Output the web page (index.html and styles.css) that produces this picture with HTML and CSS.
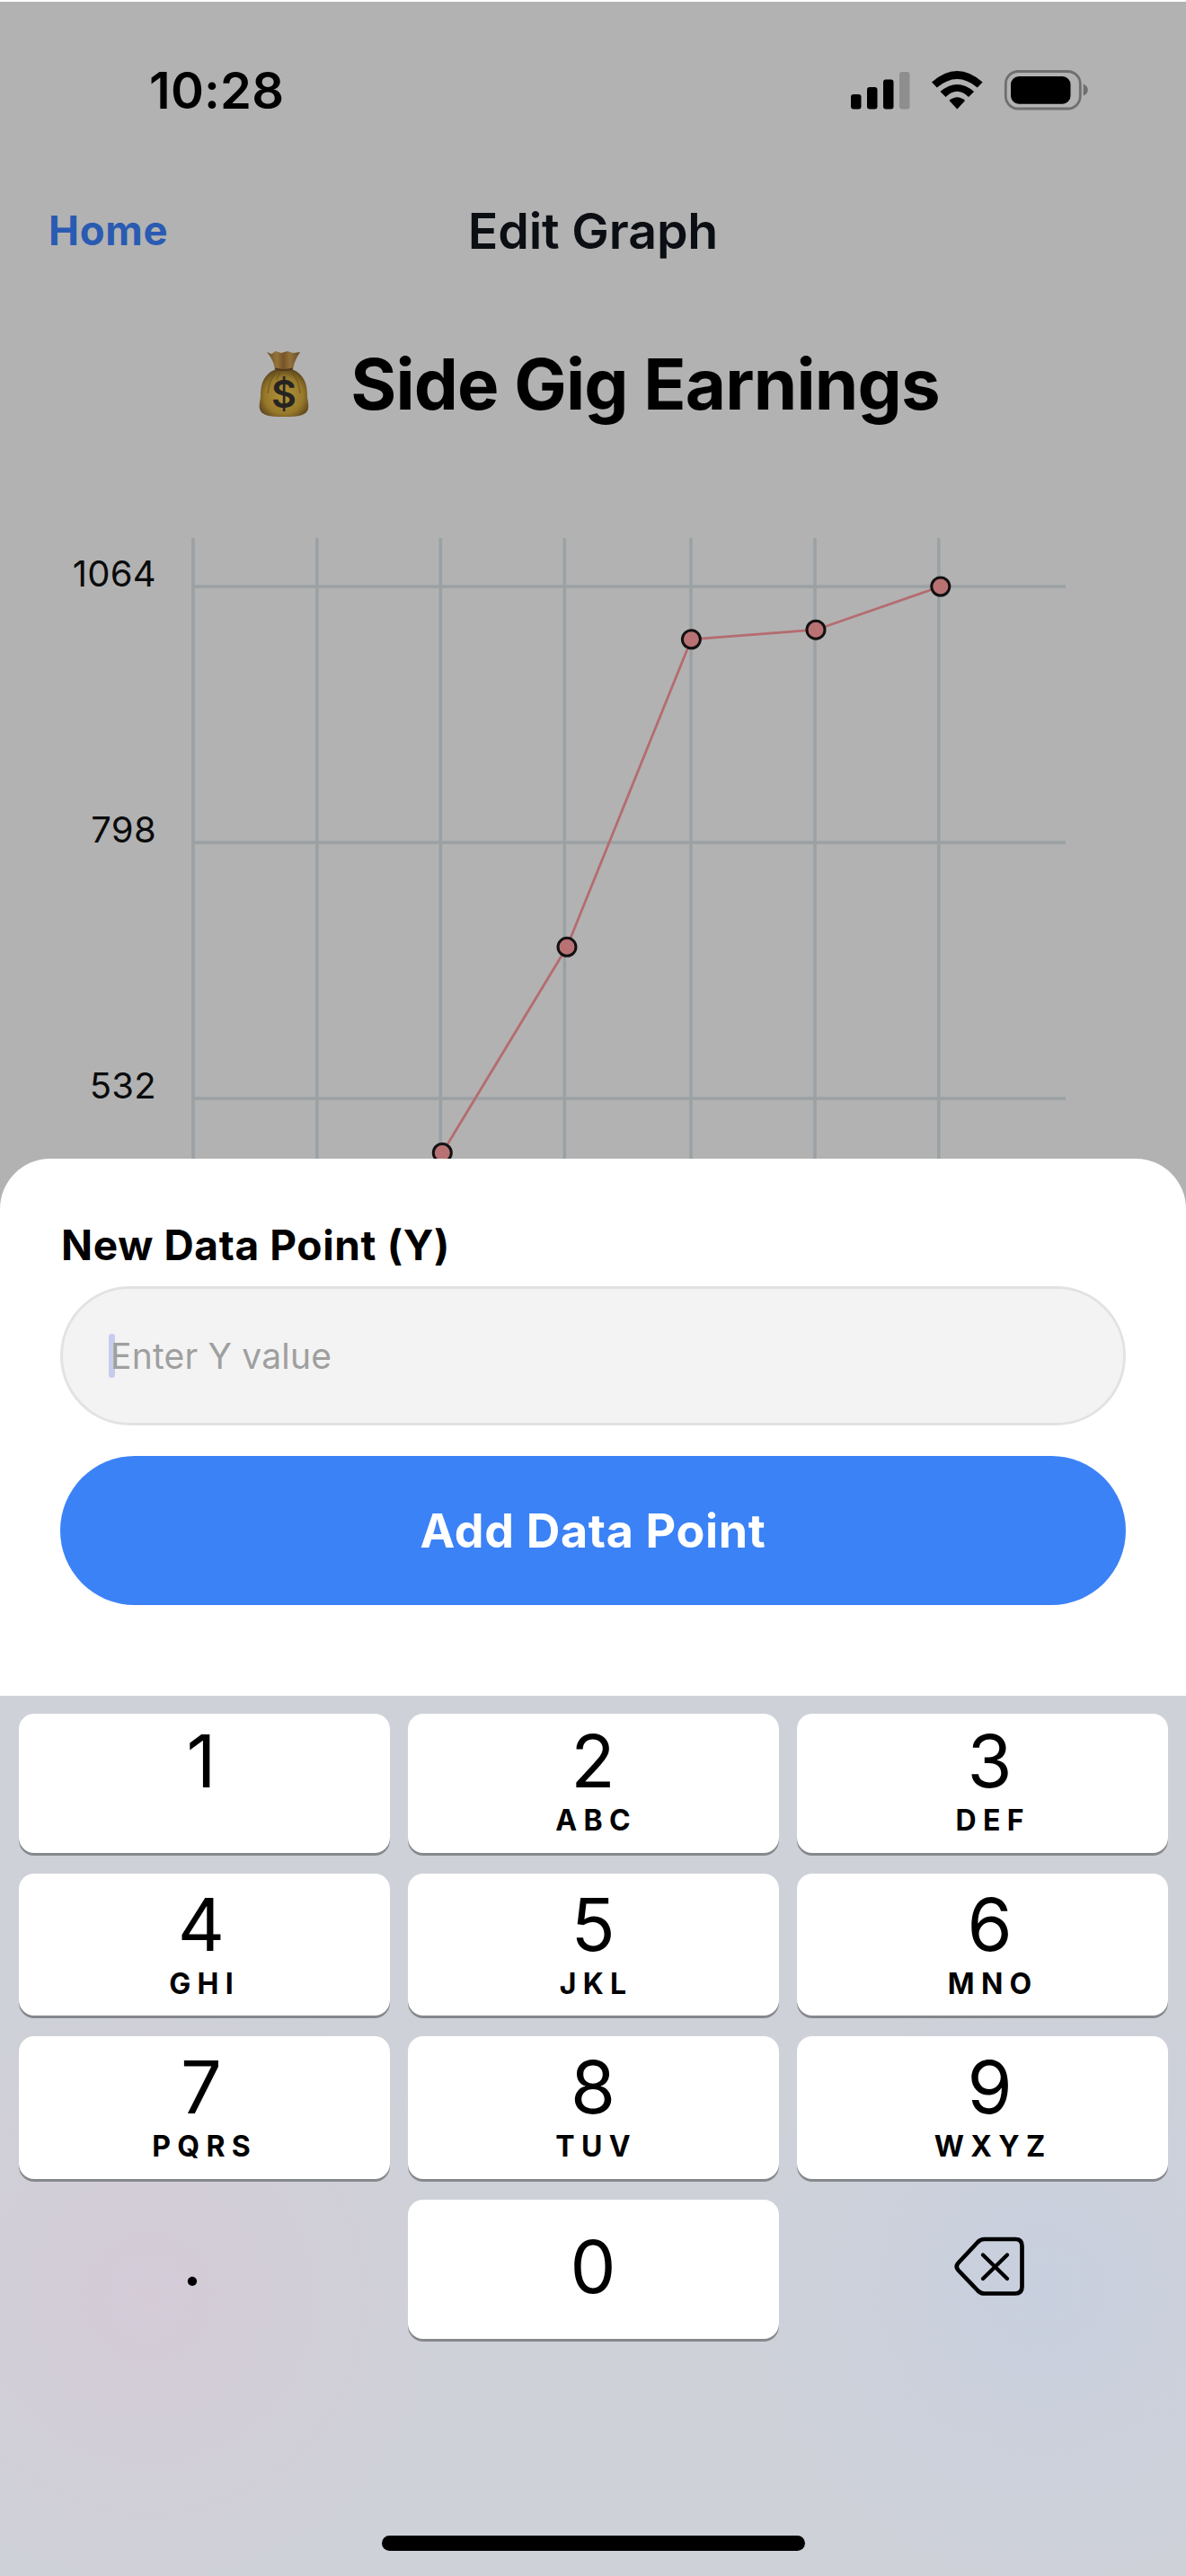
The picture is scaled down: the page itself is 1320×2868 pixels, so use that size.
FILE: index.html
```html
<!DOCTYPE html>
<html lang="en">
<head>
<meta charset="utf-8">
<title>Edit Graph</title>
<link rel="stylesheet" href="styles.css">
</head>
<body>
<div class="screen">
  <div class="page">
    <header class="status">
      <span class="time">10:28</span>
      <svg class="status-icons" width="266" height="46" viewBox="946 78 266 46">
        <g>
          <rect x="947" y="105" width="11.5" height="16.500" rx="3"/>
          <rect x="965" y="97" width="11.500" height="24.500" rx="3"/>
          <rect x="983" y="88.500" width="11.500" height="33" rx="3"/>
          <rect x="1001" y="80" width="11.500" height="41.500" rx="3" fill="#8e8e8e"/>
        </g>
        <path d="M1037 91.500Q1065.300 66.500 1093.600 91.500L1087.800 97.500Q1065.300 78.500 1042.800 97.500Z"/>
        <path d="M1046.500 102Q1065.300 86 1084.100 102L1078 108Q1065.300 95.500 1052.600 108Z"/>
        <path d="M1056.500 112Q1065.300 104.500 1074.100 112L1065.300 121.500Z"/>
        <rect x="1119.300" y="79.500" width="83" height="41.500" rx="14" fill="none" stroke="#6f6f6f" stroke-width="2.800"/>
        <rect x="1125" y="85" width="66.500" height="30.700" rx="9"/>
        <path d="M1205.700 93.500Q1210.800 95.500 1210.800 100T1205.700 106.500Z" fill="#6f6f6f"/>
      </svg>
    </header>
    <nav class="nav">
      <a class="back">Home</a>
      <h1 class="nav-title">Edit Graph</h1>
    </nav>
    <div class="heading">
      <svg class="bag" width="56" height="75" viewBox="0 0 56 75">
        <defs>
          <radialGradient id="sack" cx=".5" cy=".55" r=".6">
            <stop offset="0" stop-color="#b09339"/>
            <stop offset=".65" stop-color="#98792b"/>
            <stop offset="1" stop-color="#54401b"/>
          </radialGradient>
          <linearGradient id="neck" x1="0" x2="1" y1="0" y2="0">
            <stop offset="0" stop-color="#68502a"/>
            <stop offset=".3" stop-color="#94733a"/>
            <stop offset=".5" stop-color="#755425"/>
            <stop offset=".7" stop-color="#93713a"/>
            <stop offset="1" stop-color="#634b26"/>
          </linearGradient>
        </defs>
        <path d="M17 22C6 27 2 37 2 50C2 56 0 59 1 65C3 73 12 74 28 74S53 73 55 65C56 59 54 56 54 50C54 37 50 27 39 22Z" fill="url(#sack)"/>
        <path d="M9 2L14 4L19 1L25 3L32 1L38 3L46 2C42 8 39 14 38 21Q28 24 18 21C17 14 14 8 9 2Z" fill="url(#neck)"/>
        <path d="M18 20.500Q28 23.500 38 20.500" fill="none" stroke="#51391a" stroke-width="2.200"/>
        <path d="M19 25Q11 34 10 48M24 25Q21 28 20 33M37 25Q45 34 46 48" fill="none" stroke="#6b531f" stroke-width="1.500" opacity=".7"/>
        <text x="28" y="64" text-anchor="middle" class="bag-sign">$</text>
      </svg>
      <h2 class="title">Side Gig Earnings</h2>
    </div>
    <svg class="chart" width="1320" height="807" viewBox="0 543 1320 807">
      <g class="grid">
        <path d="M215 599V1350M352.800 599V1350M490.300 599V1350M628.300 599V1350M769 599V1350M907 599V1350M1044.800 599V1350"/>
        <path d="M215 653H1186M215 938H1186M215 1223H1186"/>
      </g>
      <g class="axis">
        <text x="174" y="653">1064</text>
        <text x="174" y="938">798</text>
        <text x="174" y="1223">532</text>
      </g>
      <path class="series" d="M492.300 1283.500L631 1054.300L769.400 711.800L908 701.200L1046.800 653"/>
      <g class="dots">
        <circle cx="492.300" cy="1283.500" r="10"/>
        <circle cx="631" cy="1054.300" r="10"/>
        <circle cx="769.400" cy="711.800" r="10"/>
        <circle cx="908" cy="701.200" r="10"/>
        <circle cx="1046.800" cy="653" r="10"/>
      </g>
    </svg>
  </div>

  <section class="sheet">
    <div class="label">New Data Point (Y)</div>
    <div class="field"><span class="caret"></span><span class="placeholder">Enter Y value</span></div>
    <div class="button"><span>Add Data Point</span></div>
  </section>

  <section class="keyboard">
    <div class="keys">
      <div class="key first left"><b>1</b></div>
      <div class="key first"><b>2</b><i>ABC</i></div>
      <div class="key first right"><b>3</b><i>DEF</i></div>
      <div class="key left"><b>4</b><i>GHI</i></div>
      <div class="key"><b>5</b><i>JKL</i></div>
      <div class="key right"><b>6</b><i>MNO</i></div>
      <div class="key left"><b>7</b><i>PQRS</i></div>
      <div class="key"><b>8</b><i>TUV</i></div>
      <div class="key right"><b>9</b><i>WXYZ</i></div>
      <div class="plain point"><span class="dot">.</span></div>
      <div class="key zero"><b>0</b></div>
      <div class="plain erase">
        <svg width="80" height="70" viewBox="0 0 80 70" fill="none" stroke="#000" stroke-width="4.700" stroke-linecap="round" stroke-linejoin="round">
          <path d="M34.500 4H69Q76.500 4 76.500 11.500V57Q76.500 64.500 69 64.500H34.500Q30.500 64.500 27.500 61.500L5.500 38.500Q2 34.500 5.500 30.500L27.500 7Q30.500 4 34.500 4Z"/>
          <path d="M33 21.500L60 48M60 21.500L33 48" stroke-width="4.300"/>
        </svg>
      </div>
    </div>
    <div class="home-bar"></div>
  </section>
</div>
</body>
</html>
```
FILE: styles.css
```css
* { box-sizing: border-box; }
body {
  margin: 0;
  background: #fff;
  color: #000;
  font-family: Inter, "Liberation Sans", sans-serif;
}
.screen {
  width: 1320px;
  height: 2868px;
  overflow: hidden;
  display: flex;
  flex-direction: column;
}
.page {
  flex: none;
  height: 1350px;
  border-top: 2px solid #fdfdfd;
  background: #b2b2b2;
}
.status {
  height: 200px;
  padding: 0 108px 2px 166px;
  display: flex;
  align-items: center;
  justify-content: space-between;
}
.time { font-size: 56px; font-weight: 600; letter-spacing: .2px; }
.nav {
  height: 109px;
  padding: 0 54px;
  display: grid;
  grid-template-columns: 1fr auto 1fr;
  align-items: center;
}
.back { font-size: 45.500px; font-weight: 700; color: #2a5bb2; letter-spacing: .7px; }
.nav-title { margin: 0; font-size: 55.500px; font-weight: 600; color: #0b0f13; letter-spacing: -.15px; }
.heading {
  height: 232px;
  padding-left: 14px;
  display: flex;
  align-items: center;
  justify-content: center;
  gap: 46px;
}
.bag-sign { font-size: 43px; font-weight: 600; fill: #262420; }
.title { margin: 0; font-size: 78px; font-weight: 700; white-space: nowrap; letter-spacing: -.85px; }
.chart { display: block; }
.grid { fill: none; stroke: #9ba1a4; stroke-width: 3.600px; }
.axis { font-size: 40px; text-anchor: end; fill: #0a0b0c; letter-spacing: .3px; }
.series { fill: none; stroke: #b56c70; stroke-width: 2.800px; }
.dots { fill: #b87274; stroke: #131112; stroke-width: 3px; }

.sheet {
  flex: none;
  position: relative;
  height: 598px;
  margin-top: -60px;
  padding: 66px 67px 0;
  background: #fff;
  border-radius: 56px 56px 0 0;
}
.label { height: 60px; line-height: 60px; font-size: 46px; font-weight: 700; letter-spacing: .65px; padding-left: 1px; white-space: nowrap; }
.field {
  height: 155px;
  margin-top: 16px;
  padding-left: 51px;
  display: flex;
  align-items: center;
  border: 3px solid #e2e2e2;
  border-radius: 78px;
  background: #f3f3f3;
}
.caret { width: 7px; height: 49px; border-radius: 3px; background: #c6cdec; }
.placeholder { margin-left: -5px; font-size: 39px; color: #9f9f9f; letter-spacing: .2px; }
.button {
  height: 166px;
  margin-top: 34px;
  border-radius: 83px;
  background: #3b82f6;
  color: #fff;
  display: flex;
  align-items: center;
  justify-content: center;
  font-size: 52px;
  font-weight: 700;
  letter-spacing: .65px;
}

.keyboard {
  flex: none;
  height: 980px;
  padding: 20px 20.500px 0;
  background:
    radial-gradient(circle 360px at 165px 670px, #d4cbd7 0%, rgba(212, 203, 215, 0) 100%),
    radial-gradient(circle 340px at 1160px 660px, #c8cfde 0%, rgba(200, 207, 222, 0) 100%),
    #ced1d8;
}
.keys {
  display: grid;
  grid-template-columns: repeat(3, 1fr);
  grid-template-rows: 155px 158px 159px 155px;
  gap: 23px 20px;
}
.key {
  padding-top: 17px;
  display: flex;
  flex-direction: column;
  align-items: center;
  border-radius: 17px;
  background: #fff;
  box-shadow: 0 3px 0 #85888c;
}
.key.first { padding-top: 13px; }
.key.left { padding-right: 6px; }
.key.right { padding-left: 17px; }
.key.zero { padding-top: 35px; }
.key b { font-size: 81px; font-weight: 400; line-height: 80px; }
.key i { margin-top: 10px; font-size: 32px; font-weight: 700; font-style: normal; line-height: 32px; letter-spacing: 7.300px; padding-left: 7.300px; }
.plain { display: flex; align-items: center; justify-content: center; }
.point { padding: 0 26px 19px 0; }
.dot { font-size: 78px; line-height: 80px; }
.erase { padding: 0 0 6px 16px; }
.home-bar { width: 471px; height: 17px; margin: 219px auto 0; border-radius: 9px; background: #000; }
```
